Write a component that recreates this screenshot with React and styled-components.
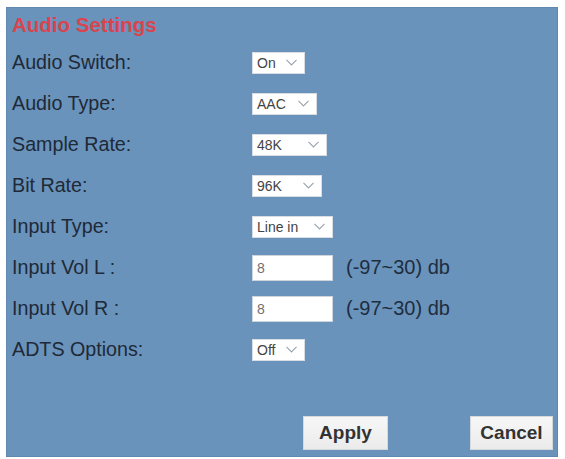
import React from 'react';
import styled, { createGlobalStyle } from 'styled-components';

const GlobalStyle = createGlobalStyle`
    html, body {
        margin: 0;
        padding: 0;
        background: #ffffff;
    }
    body {
        font-family: "Liberation Sans", Arial, sans-serif;
    }
`;

/*
* Panel Styles
* */
const Page = styled('div')`
    width: 565px;
    height: 459px;
    padding: 7px 7px 2px 6px;
    box-sizing: border-box;
`;

const Panel = styled('div')`
    height: 450px;
    background: #6993bb;
    box-shadow: inset 0 0 0 1px #6188b0;
    display: flex;
    flex-direction: column;
    box-sizing: border-box;
    padding: 0 5px 7px 6px;
`;

const Title = styled('div')`
    height: 35px;
    line-height: 35px;
    font-size: 20.5px;
    font-weight: bold;
    color: #d9444e;
`;

const Rows = styled('div')`
    display: flex;
    flex-direction: column;
`;

const Row = styled('div')`
    display: grid;
    grid-template-columns: 240px auto 1fr;
    align-items: center;
    height: 41px;
`;

const Label = styled('label')`
    font-size: 19.7px;
    color: #1f2937;
`;

const SelectBox = styled('div')`
    width: ${(p) => p.$w}px;
    height: 22px;
    box-sizing: border-box;
    background: #ffffff;
    border: 1px solid #d8dde3;
    display: flex;
    align-items: center;
    padding: 0 4px 0 4px;
    font-size: 14px;
    color: #444444;
`;

const SelectText = styled('span')`
    flex: 1;
`;

const Chevron = styled('svg')`
    width: 11px;
    height: 7px;
    margin-right: 3px;
`;

const TextBox = styled('input')`
    width: 81px;
    height: 26px;
    box-sizing: border-box;
    border: 1px solid #cfd5dc;
    background: #ffffff;
    padding: 0 4px;
    font-family: "Liberation Sans", Arial, sans-serif;
    font-size: 14px;
    color: #707070;
    outline: none;
`;

const Hint = styled('span')`
    font-size: 20px;
    color: #1f2d40;
    margin-left: 13px;
`;

const ButtonBar = styled('div')`
    margin-top: auto;
    display: flex;
    justify-content: flex-end;
    gap: 82px;
`;

const Button = styled('button')`
    width: ${(p) => p.$w}px;
    height: 34px;
    border: 1px solid #d6d9dc;
    background: linear-gradient(#f7f7f7, #ebebeb);
    font-family: "Liberation Sans", Arial, sans-serif;
    font-size: 19px;
    font-weight: bold;
    color: #333333;
    padding: 0;
`;

const Select = ({ value, width }) => (
	<SelectBox $w={width}>
		<SelectText>{value}</SelectText>
		<Chevron viewBox="0 0 11 7">
			<path d="M0.5 0.8 L5.5 6 L10.5 0.8" fill="none" stroke="#9aa3ad" strokeWidth="1.1"/>
		</Chevron>
	</SelectBox>
);

const fields = [
	{ label: 'Audio Switch:', kind: 'select', value: 'On', width: 53 },
	{ label: 'Audio Type:', kind: 'select', value: 'AAC', width: 65 },
	{ label: 'Sample Rate:', kind: 'select', value: '48K', width: 75 },
	{ label: 'Bit Rate:', kind: 'select', value: '96K', width: 70 },
	{ label: 'Input Type:', kind: 'select', value: 'Line in', width: 81 },
	{ label: 'Input Vol L :', kind: 'input', value: '8' },
	{ label: 'Input Vol R :', kind: 'input', value: '8' },
	{ label: 'ADTS Options:', kind: 'select', value: 'Off', width: 53 },
];

export default function App() {
	return (
		<Page>
			<GlobalStyle/>
			<Panel>
				<Title>Audio Settings</Title>
				<Rows>
					{fields.map((f) => (
						<Row key={f.label}>
							<Label>{f.label}</Label>
							{f.kind === 'select'
								? <Select value={f.value} width={f.width}/>
								: <TextBox defaultValue={f.value}/>}
							{f.kind === 'input' ? <Hint>(-97~30) db</Hint> : <span/>}
						</Row>
					))}
				</Rows>
				<ButtonBar>
					<Button $w={85}>Apply</Button>
					<Button $w={83}>Cancel</Button>
				</ButtonBar>
			</Panel>
		</Page>
	);
}
